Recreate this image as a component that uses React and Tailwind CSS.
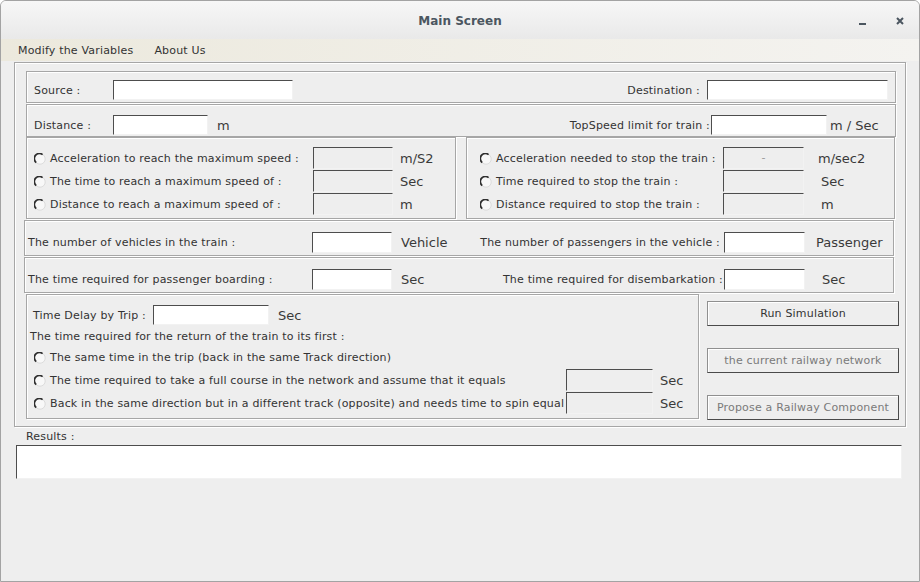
import React from 'react';

// Swing-style "Main Screen" window for the railway simulator.

const font = "font-['DejaVu_Sans',_Verdana,_sans-serif]";
const small = 'text-[11px] tracking-[0.18px]';

function Radio() {
  return (
    <svg width="12" height="12" viewBox="0 0 12 12" className="shrink-0">
      <circle cx="6" cy="6" r="5.2" fill="#f8f8f8" stroke="#d4d4d4" strokeWidth="0.8" />
      <path d="M2.2 9.6 A5 5 0 0 1 8.6 1.6" fill="none" stroke="#2e2e2e" strokeWidth="1.7" />
    </svg>
  );
}

function Field({ w, h = 20, disabled = false, children }) {
  return (
    <div
      className={`shrink-0 border border-t-[#4d4d4d] border-l-[#4d4d4d] border-r-[#f2f2f2] border-b-[#f2f2f2] flex items-center justify-center text-[11px] text-[#9a9a9a] ${
        disabled ? 'bg-[#eeeeee]' : 'bg-white'
      }`}
      style={{ width: w, height: h }}
    >
      {children}
    </div>
  );
}

const etched = 'border border-[#a6a6a6] shadow-[inset_1px_1px_0_#ffffff,1px_1px_0_#ffffff]';

function Unit({ children, className = '' }) {
  return <span className={`text-[13px] leading-none text-[#3a3a3a] whitespace-nowrap ${className}`}>{children}</span>;
}

function Label({ children, className = '' }) {
  return <span className={`${small} leading-[13px] text-[#333333] whitespace-nowrap ${className}`}>{children}</span>;
}

function RadioRow({ cell, label, field, unit, unitClass }) {
  return (
    <div className="flex items-center h-[22px]">
      <div className="flex items-center gap-[4px] overflow-hidden shrink-0 pt-[1px]" style={{ width: cell }}>
        <Radio />
        <Label>{label}</Label>
      </div>
      <Field w={field} h={22} disabled />
      <Unit className={unitClass}>{unit}</Unit>
    </div>
  );
}

function Button({ children, disabled }) {
  return (
    <div
      className={`h-[25px] w-[192px] flex items-center justify-center pt-[2px] bg-[#eeeeee] border border-[#8f8f8f] border-r-[#4a4a4a] border-b-[#4a4a4a] shadow-[inset_1px_1px_0_#ffffff] ${small} ${
        disabled ? 'text-[#7a7a7a]' : 'text-[#333333]'
      }`}
    >
      {children}
    </div>
  );
}

export default function App() {
  return (
    <div className={`${font} w-[920px] h-[582px] bg-[#eeeeee] border border-[#a3a3a3] rounded-t-[6px] overflow-hidden flex flex-col`}>
      {/* title bar */}
      <div className="h-[38px] shrink-0 grid grid-cols-[1fr_auto_1fr] items-center bg-gradient-to-b from-[#f7f7f7] to-[#e9e9e9]">
        <div />
        <div className="text-[12px] font-bold text-[#4b5660] pt-[2px]">Main Screen</div>
        <div className="flex items-center justify-end pr-[15px] pt-[2px]">
          <div className="w-[7px] h-[2px] bg-[#4b5660] mt-[6px]" />
          <svg width="8" height="8" viewBox="0 0 8 8" className="ml-[30px]">
            <path d="M1 1 L7 7 M7 1 L1 7" stroke="#4b5660" strokeWidth="2" />
          </svg>
        </div>
      </div>

      {/* menu bar */}
      <div className={`h-[22px] shrink-0 flex items-center pt-[2px] bg-gradient-to-r from-[#ece9dd] to-[#f4f3f0] ${small} text-[#333333]`}>
        <span className="ml-[17px]">Modify the Variables</span>
        <span className="ml-[21px]">About Us</span>
      </div>

      {/* main panel */}
      <div className={`mt-[1px] ml-[13px] w-[892px] h-[365px] shrink-0 ${etched} flex flex-col items-start`}>
        {/* source / destination */}
        <div className={`mt-[8px] ml-[11px] w-[870px] h-[32px] ${etched} flex items-center pt-[6px] pl-[7px] pr-[7px]`}>
          <Label className="w-[79px]">Source :</Label>
          <Field w={180} />
          <Label className="flex-1 text-right mr-[7px]">Destination :</Label>
          <Field w={181} />
        </div>

        {/* distance / top speed */}
        <div className={`mt-[1px] ml-[11px] w-[870px] h-[33px] ${etched} flex items-center pt-[9px] pl-[7px]`}>
          <Label className="w-[79px]">Distance :</Label>
          <Field w={95} />
          <Unit className="ml-[9px]">m</Unit>
          <Label className="flex-1 text-right mr-[1px]">TopSpeed limit for train :</Label>
          <Field w={116} />
          <Unit className="w-[68px] pl-[3px]">m / Sec</Unit>
        </div>

        {/* acceleration / braking */}
        <div className="ml-[11px] flex gap-[10px]">
          <div className={`w-[430px] h-[82px] ${etched} pt-[9px] pl-[7px] flex flex-col gap-[1px]`}>
            <RadioRow cell={279} label="Acceleration to reach the maximum speed :" field={80} unit="m/S2" unitClass="ml-[7px]" />
            <RadioRow cell={279} label="The time to reach a maximum speed of :" field={80} unit="Sec" unitClass="ml-[7px]" />
            <RadioRow cell={279} label="Distance to reach a maximum speed of :" field={80} unit="m" unitClass="ml-[7px]" />
          </div>
          <div className={`w-[429px] h-[82px] ${etched} pt-[9px] pl-[13px] flex flex-col gap-[1px]`}>
            <div className="flex items-center h-[22px]">
              <div className="flex items-center gap-[4px] w-[243px] shrink-0 pt-[1px]">
                <Radio />
                <Label>Acceleration needed to stop the train :</Label>
              </div>
              <Field w={81} h={22} disabled>-</Field>
              <Unit className="ml-[14px]">m/sec2</Unit>
            </div>
            <RadioRow cell={243} label="Time required to stop the train :" field={81} unit="Sec" unitClass="ml-[17px]" />
            <RadioRow cell={243} label="Distance required to stop the train :" field={81} unit="m" unitClass="ml-[17px]" />
          </div>
        </div>

        {/* vehicles / passengers */}
        <div className={`mt-[1px] ml-[9px] w-[870px] h-[36px] ${etched} flex items-center pt-[10px] pb-[2px] pl-[3px]`}>
          <Label className="w-[284px]">The number of vehicles in the train :</Label>
          <Field w={80} h={21} />
          <Unit className="ml-[9px]">Vehicle</Unit>
          <Label className="flex-1 text-right mr-[4px]">The number of passengers in the vehicle :</Label>
          <Field w={81} h={21} />
          <Unit className="w-[88px] pl-[11px]">Passenger</Unit>
        </div>

        {/* boarding / disembarkation */}
        <div className={`mt-[1px] ml-[9px] w-[870px] h-[36px] ${etched} flex items-center pt-[10px] pb-[2px] pl-[3px]`}>
          <Label className="w-[284px]">The time required for passenger boarding :</Label>
          <Field w={80} h={21} />
          <Unit className="ml-[9px]">Sec</Unit>
          <Label className="flex-1 text-right mr-[1px]">The time required for disembarkation :</Label>
          <Field w={81} h={21} />
          <Unit className="w-[88px] pl-[17px]">Sec</Unit>
        </div>

        {/* return-trip options and actions */}
        <div className="mt-[1px] ml-[11px] flex items-start gap-[8px]">
          <div className={`w-[673px] h-[125px] ${etched} flex flex-col pt-[10px]`}>
            <div className="flex items-center pl-[6px]">
              <Label className="w-[120px]">Time Delay by Trip :</Label>
              <Field w={116} />
              <Unit className="ml-[9px]">Sec</Unit>
            </div>
            <Label className="mt-[5px] pl-[3px]">The time required for the return of the train to its first :</Label>
            <div className="mt-[3px] pl-[7px] flex flex-col gap-[1px]">
              <div className="flex items-center h-[22px] gap-[4px] pt-[1px]">
                <Radio />
                <Label>The same time in the trip (back in the same Track direction)</Label>
              </div>
              <RadioRow cell={532} label="The time required to take a full course in the network and assume that it equals" field={87} unit="Sec" unitClass="ml-[7px]" />
              <RadioRow cell={532} label="Back in the same direction but in a different track (opposite) and needs time to spin equal" field={87} unit="Sec" unitClass="ml-[7px]" />
            </div>
          </div>
          <div className="mt-[7px] flex flex-col gap-[22px]">
            <Button>Run Simulation</Button>
            <Button disabled>the current railway network</Button>
            <Button disabled>Propose a Railway Component</Button>
          </div>
        </div>
      </div>

      {/* results */}
      <Label className="mt-[3px] ml-[25px]">Results :</Label>
      <div className="mt-[2px] ml-[15px] w-[886px] h-[34px] bg-white border border-t-[#4d4d4d] border-l-[#4d4d4d] border-r-[#f2f2f2] border-b-[#f2f2f2]" />
    </div>
  );
}
